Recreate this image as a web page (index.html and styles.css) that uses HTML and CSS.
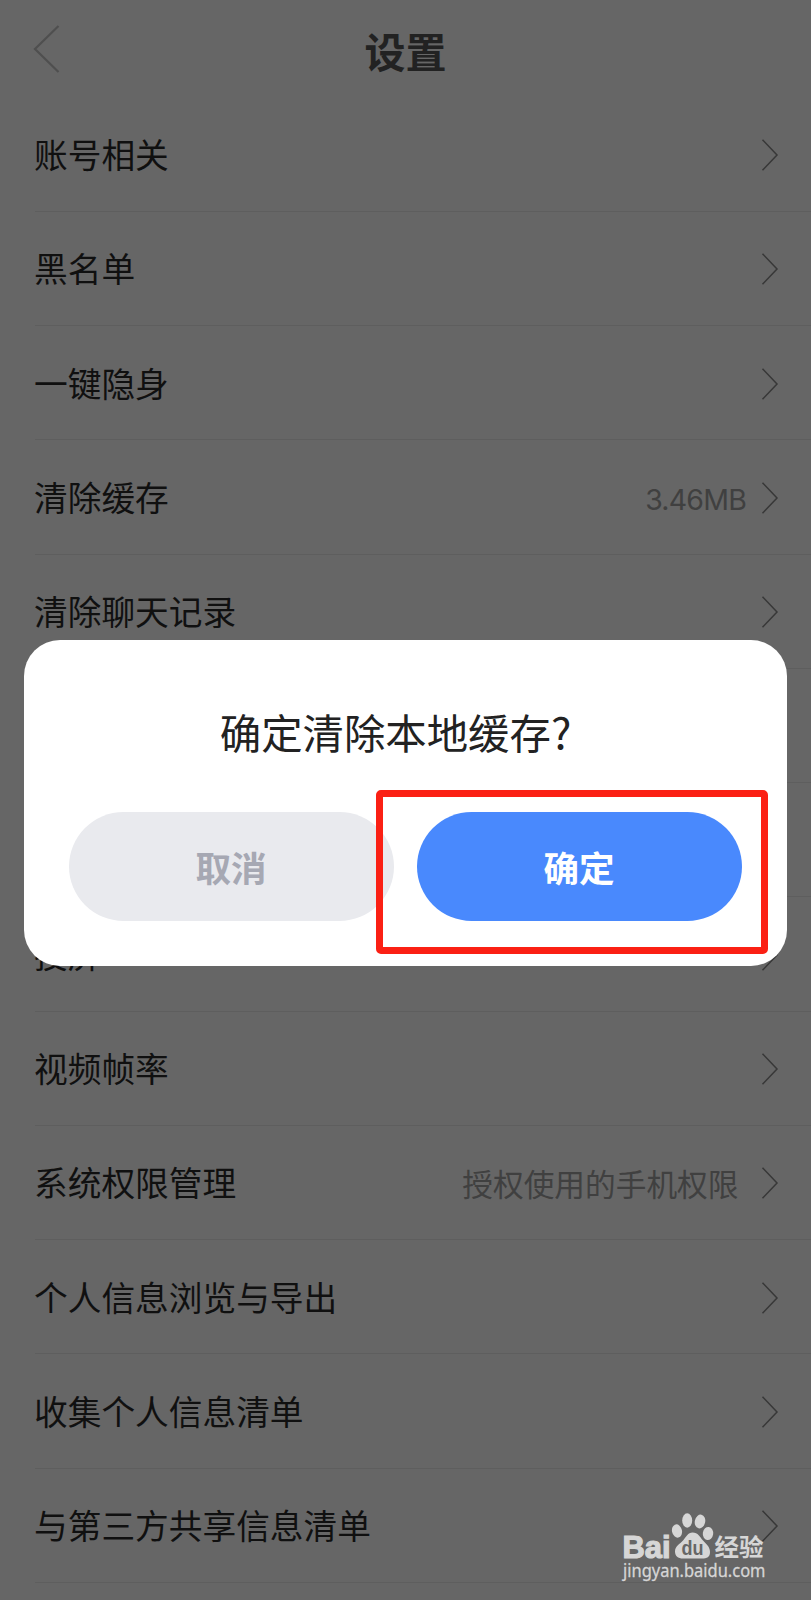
FILE: index.html
```html
<!DOCTYPE html>
<html lang="zh-CN">
<head>
<meta charset="utf-8">
<title>设置</title>
<link rel="stylesheet" href="styles.css">
</head>
<body>
<svg class="defs" width="0" height="0" aria-hidden="true">
  <symbol id="chevron" viewBox="0 0 18 34"><path d="M1.5 1.8 L16 17 L1.5 32.2" fill="none" stroke="currentColor" stroke-width="1.5"/></symbol>
</svg>
<div class="screen">
  <header class="header">
    <svg class="back" viewBox="0 0 28 50"><path d="M25.5 2 L2 25 L25.5 48" fill="none" stroke="currentColor" stroke-width="2.2"/></svg>
    <h1 class="title">设置</h1>
  </header>
  <ul class="list">
    <li class="row"><span class="label">账号相关</span><svg class="chevron"><use href="#chevron"/></svg></li>
    <li class="row"><span class="label">黑名单</span><svg class="chevron"><use href="#chevron"/></svg></li>
    <li class="row"><span class="label">一键隐身</span><svg class="chevron"><use href="#chevron"/></svg></li>
    <li class="row"><span class="label">清除缓存</span><span class="value value-size">3.46MB</span><svg class="chevron"><use href="#chevron"/></svg></li>
    <li class="row"><span class="label">清除聊天记录</span><svg class="chevron"><use href="#chevron"/></svg></li>
    <li class="row"></li>
    <li class="row"></li>
    <li class="row"><span class="label">投屏</span><svg class="chevron"><use href="#chevron"/></svg></li>
    <li class="row"><span class="label">视频帧率</span><svg class="chevron"><use href="#chevron"/></svg></li>
    <li class="row"><span class="label">系统权限管理</span><span class="value">授权使用的手机权限</span><svg class="chevron"><use href="#chevron"/></svg></li>
    <li class="row"><span class="label">个人信息浏览与导出</span><svg class="chevron"><use href="#chevron"/></svg></li>
    <li class="row"><span class="label">收集个人信息清单</span><svg class="chevron"><use href="#chevron"/></svg></li>
    <li class="row"><span class="label">与第三方共享信息清单</span><svg class="chevron"><use href="#chevron"/></svg></li>
  </ul>

  <div class="dialog">
    <p class="message">确定清除本地缓存<span class="mark">?</span></p>
    <div class="actions">
      <button class="btn cancel">取消</button>
      <button class="btn confirm">确定</button>
    </div>
  </div>
  <div class="highlight"></div>

  <svg class="watermark" viewBox="0 0 150 74">
    <g fill="#d6d6d6">
      <text class="wm-bai" x="1.5" y="47.5" textLength="48" lengthAdjust="spacingAndGlyphs">Bai</text>
      <ellipse cx="56" cy="21" rx="5" ry="6.7" transform="rotate(-12 56 21)"/>
      <ellipse cx="66.2" cy="10.5" rx="5" ry="7.2"/>
      <ellipse cx="79" cy="11.5" rx="5.2" ry="7" transform="rotate(12 79 11.5)"/>
      <ellipse cx="87" cy="23.5" rx="5.2" ry="6.6" transform="rotate(8 87 23.5)"/>
      <path d="M71.5 22.5 C77 22.5 79 27 82 30.5 C85 34 89 36.5 89 42 C89 47 86 48.5 81 48.5 L62 48.5 C57 48.5 54 46 54 41.5 C54 36 59 34 62 30.5 C65 27 67 22.5 71.5 22.5 Z"/>
      <text class="wm-cn" x="93.5" y="45.5" textLength="49" lengthAdjust="spacingAndGlyphs">经验</text>
      <text class="wm-url" x="2" y="67" textLength="142.5" lengthAdjust="spacingAndGlyphs">jingyan.baidu.com</text>
    </g>
    <text class="wm-du" x="60.5" y="44.5" textLength="22" lengthAdjust="spacingAndGlyphs">du</text>
  </svg>
</div>
</body>
</html>
```
FILE: styles.css
```css
* {
  box-sizing: border-box;
}

body {
  margin: 0;
  background: #666;
  font-family: "Noto Sans CJK SC", sans-serif;
}

.defs {
  position: absolute;
}

.screen {
  position: relative;
  width: 811px;
  height: 1600px;
  overflow: hidden;
  background: #666;
}

.header {
  display: grid;
  grid-template-columns: 61px 1fr 61px;
  align-items: center;
  height: 97.5px;
}

.back {
  width: 28px;
  height: 50px;
  margin-left: 33px;
  color: #4f4f4f;
}

.title {
  margin: 2px 0 0;
  font-size: 41px;
  font-weight: 700;
  line-height: 50px;
  text-align: center;
  color: #222;
}

.list {
  margin: 0;
  padding: 0 0 0 35px;
  list-style: none;
}

.row {
  display: flex;
  align-items: center;
  height: 114.25px;
  padding-right: 32px;
  border-bottom: 1px solid #5e5e5e;
}

.label {
  flex: 1;
  margin-left: -1px;
  font-size: 33.7px;
  line-height: 48px;
  color: #101010;
}

.value {
  margin-right: 22.5px;
  padding-top: 2px;
  font-size: 30.7px;
  line-height: 44px;
  color: #404040;
}

.value-size {
  margin-right: 15px;
  padding-top: 6px;
  font-family: Inter, sans-serif;
  font-size: 28.5px;
  letter-spacing: -0.8px;
}

.chevron {
  width: 18px;
  height: 34px;
  margin-top: 2px;
  color: #383838;
}

.dialog {
  position: absolute;
  top: 639.5px;
  left: 24px;
  width: 763px;
  height: 326px;
  padding: 61px 45px 0;
  border-radius: 36px;
  background: #fff;
}

.message {
  margin: 0 0 51.5px;
  padding-right: 20px;
  font-size: 41.4px;
  line-height: 60px;
  text-align: center;
  color: #222;
}

.mark {
  font-size: 43px;
  line-height: 1;
}

.actions {
  display: flex;
  gap: 23px;
}

.btn {
  flex: 1;
  height: 109px;
  padding: 1px 1px 0 0;
  border: 0;
  border-radius: 54.5px;
  font: 700 35.5px/50px "Noto Sans CJK SC", sans-serif;
}

.cancel {
  background: #e9eaee;
  color: #a6a8b3;
}

.confirm {
  background: #4989fd;
  color: #fff;
}

.highlight {
  position: absolute;
  top: 790px;
  left: 376px;
  width: 392px;
  height: 164px;
  border: 7px solid #fb2014;
  border-radius: 5px;
}

.watermark {
  position: absolute;
  top: 1510px;
  left: 621px;
  width: 150px;
  height: 74px;
  overflow: visible;
}

.wm-bai {
  font: 700 31px "Liberation Sans", sans-serif;
  stroke: #d6d6d6;
  stroke-width: 1.2px;
}

.wm-cn {
  font: 700 24px "Noto Sans CJK SC", sans-serif;
}

.wm-url {
  font: 400 18px "Noto Sans", sans-serif;
  stroke: #d6d6d6;
  stroke-width: 0.3px;
}

.wm-du {
  font: 700 20px "Liberation Sans", sans-serif;
  fill: #666;
}
```
